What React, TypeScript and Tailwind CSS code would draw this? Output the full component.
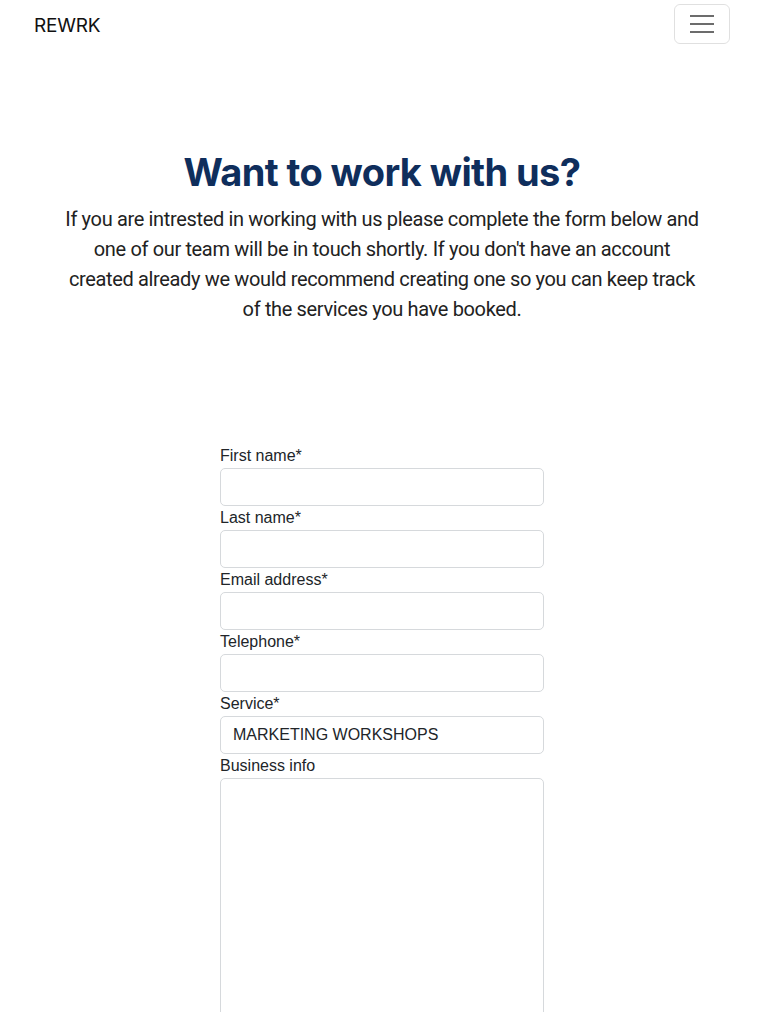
import React from "react";

const labels = ["First name*", "Last name*", "Email address*", "Telephone*"];

export default function App() {
  return (
    <div className="min-h-[1012px] bg-white text-[#212529]" style={{ fontFamily: "'Liberation Sans', Arial, sans-serif" }}>
      <nav className="flex h-[48px] items-center justify-between pl-[34px] pr-[34px]">
        <span className="pt-[4px] text-[19px] tracking-[-0.2px] text-[#111]" style={{ fontFamily: "Inter, sans-serif" }}>REWRK</span>
        <button className="flex h-[40px] w-[56px] flex-col items-center justify-center gap-[6px] rounded-[6px] border border-[rgba(0,0,0,0.12)]">
          <span className="block h-[2px] w-[24px] bg-[#6c6c6c]" />
          <span className="block h-[2px] w-[24px] bg-[#6c6c6c]" />
          <span className="block h-[2px] w-[24px] bg-[#6c6c6c]" />
        </button>
      </nav>
      <section className="flex flex-col items-center px-[40px] pt-[99px]">
        <h1 className="text-[38px] font-bold leading-[50px] tracking-[-0.6px] text-[#0f2e5c]" style={{ fontFamily: "Inter, sans-serif" }}>Want to work with us?</h1>
        <p className="mt-[7px] text-center text-[20px] leading-[30px] tracking-[-0.35px] text-[#222]" style={{ fontFamily: "Roboto, sans-serif" }}>
          If you are intrested in working with us please complete the form below and<br />
          one of our team will be in touch shortly. If you don't have an account<br />
          created already we would recommend creating one so you can keep track<br />
          of the services you have booked.
        </p>
      </section>
      <form className="mx-auto mt-[120px] flex w-[324px] flex-col">
        {labels.map((l) => (
          <div key={l} className="flex flex-col">
            <label className="text-[16px] leading-[24px] text-[#212529]">{l}</label>
            <input className="h-[38px] rounded-[5px] border border-[#d6d9dc] bg-white px-3" />
          </div>
        ))}
        <div className="flex flex-col">
          <label className="text-[16px] leading-[24px] text-[#212529]">Service*</label>
          <div className="flex h-[38px] items-center rounded-[5px] border border-[#d6d9dc] bg-white px-[12px] text-[16px] text-[#212529]">MARKETING WORKSHOPS</div>
        </div>
        <div className="flex flex-col">
          <label className="text-[16px] leading-[24px] text-[#212529]">Business info</label>
          <textarea className="h-[260px] resize-none rounded-[5px] border border-[#d6d9dc] bg-white px-3" />
        </div>
      </form>
    </div>
  );
}
